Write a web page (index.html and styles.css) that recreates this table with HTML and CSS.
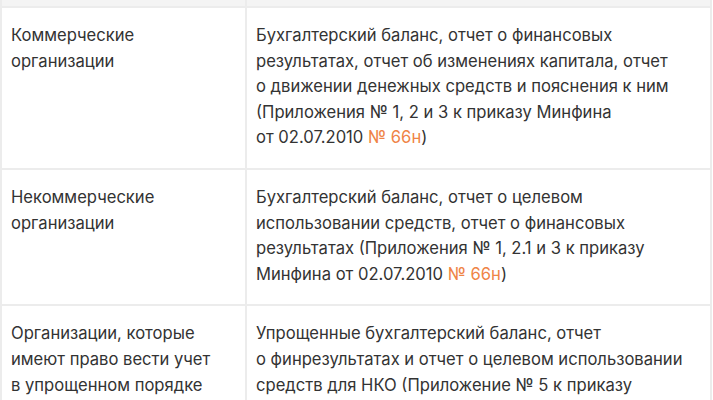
FILE: index.html
```html
<!DOCTYPE html>
<html lang="ru">
<head>
<meta charset="utf-8">
<link rel="stylesheet" href="styles.css">
</head>
<body>
<table class="doc-table">
  <colgroup><col class="col-org"><col class="col-rep"></colgroup>
  <tr class="head-tail"><td></td><td></td></tr>
  <tr>
    <td>Коммерческие<br>организации</td>
    <td>Бухгалтерский баланс, отчет о финансовых<br>результатах, отчет об изменениях капитала, отчет<br>о движении денежных средств и пояснения к ним<br>(Приложения № 1, 2 и 3 к приказу Минфина<br>от 02.07.2010 <a class="ref">№ 66н</a>)</td>
  </tr>
  <tr>
    <td>Некоммерческие<br>организации</td>
    <td>Бухгалтерский баланс, отчет о целевом<br>использовании средств, отчет о финансовых<br>результатах (Приложения № 1, 2.1 и 3 к приказу<br>Минфина от 02.07.2010 <a class="ref">№ 66н</a>)</td>
  </tr>
  <tr>
    <td>Организации, которые<br>имеют право вести учет<br>в упрощенном порядке</td>
    <td>Упрощенные бухгалтерский баланс, отчет<br>о финрезультатах и отчет о целевом использовании<br>средств для НКО (Приложение № 5 к приказу<br>Минфина от 02.07.2010 <a class="ref">№ 66н</a>)</td>
  </tr>
</table>
</body>
</html>
```

FILE: styles.css
```css
html, body {
  margin: 0;
  padding: 0;
  background: #ffffff;
}
.doc-table {
  border-collapse: collapse;
  width: 710px;
  table-layout: fixed;
  font-family: Inter, "Noto Sans", sans-serif;
  font-size: 16.6px;
  line-height: 25.6px;
  color: #333333;
}
.col-org { width: 245px; }
.col-rep { width: 465px; }
.doc-table td {
  border: 2px solid #ececec;
  padding: 15px 8px 17px 9px;
  vertical-align: top;
}
.doc-table tr.head-tail td {
  padding: 0;
  height: 6px;
  background: #f4f4f4;
  border-top: none;
}
.ref {
  color: #ef8446;
  text-decoration: none;
}
```
